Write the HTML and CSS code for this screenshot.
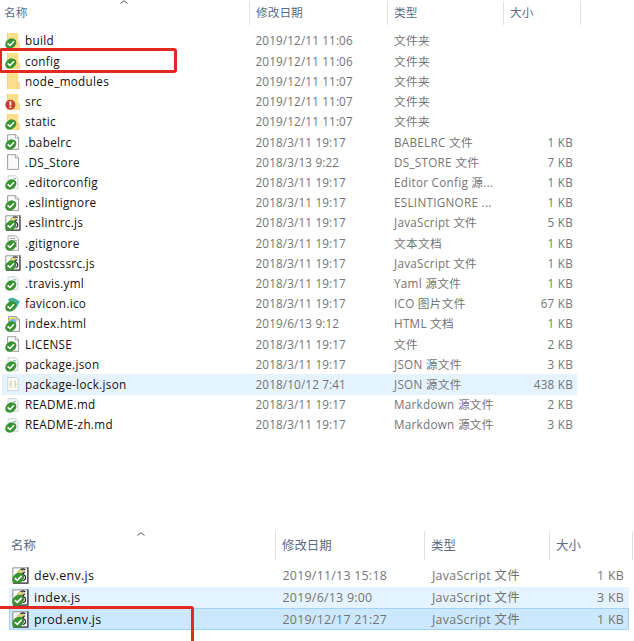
FILE: index.html
```
<!DOCTYPE html>
<html lang="zh-CN">
<head>
    <meta charset="UTF-8">
    <title>文件列表</title>
    <link rel="stylesheet" href="styles.css">
</head>
<body>
    <!-- Icon set -->
    <svg class="sprite" width="0" height="0">
        <symbol id="ok" viewBox="0 0 16 16">
            <ellipse cx="5.8" cy="10.5" rx="5.9" ry="4.7" transform="rotate(-35 5.8 10.5)" fill="#36932f"/>
            <path d="M2.6 10.4l2.4 2.1 4-4.2" fill="none" stroke="#fff" stroke-width="1.6"/>
        </symbol>
        <symbol id="folder" viewBox="0 0 16 16">
            <path d="M2.3 0h11v9.5h1.2V16H2.3z" fill="#fbdf8d"/>
            <path d="M2.5 0v16M12.3 15.5v-5.5l1-1 1 1v5.5z" fill="#ffe9a9" stroke="#ecc864" stroke-width=".7"/>
        </symbol>
        <symbol id="folder-ok" viewBox="0 0 16 16">
            <use href="#folder"/><use href="#ok"/>
        </symbol>
        <symbol id="folder-err" viewBox="0 0 16 16">
            <use href="#folder"/>
            <circle cx="5.4" cy="10.7" r="5" fill="#c8402c"/>
            <path d="M5.4 7.2v4.2M5.4 12.4v1.6" stroke="#fff" stroke-width="1.7"/>
        </symbol>
        <symbol id="page" viewBox="0 0 16 16">
            <path d="M2.6.7h8l3 3v11.7h-11z" fill="#fafafa" stroke="#939393" stroke-width=".9"/>
            <path d="M10.4.7v3.2h3.2" fill="#fff" stroke="#939393" stroke-width=".8"/>
        </symbol>
        <symbol id="page-ok" viewBox="0 0 16 16">
            <use href="#page"/><use href="#ok"/>
        </symbol>
        <symbol id="source" viewBox="0 0 16 16">
            <path d="M3 1.8h7.6l2.3 2.3v10.5H3z" fill="#f7f9fa" stroke="#c3c8cc" stroke-width=".8"/>
            <path d="M8 4.8h3" stroke="#7fa6c4"/>
            <use href="#ok"/>
        </symbol>
        <symbol id="text" viewBox="0 0 16 16">
            <path d="M3 .8h7.8l2.7 2.7v11.9H3z" fill="#f4f4f4" stroke="#999" stroke-width=".8"/>
            <path d="M5 3.5h5M5 5.5h7M8 7.5h4M10 9.5h2M10 11.5h2" stroke="#999" stroke-width=".8"/>
            <use href="#ok"/>
        </symbol>
        <symbol id="json" viewBox="0 0 16 16">
            <path d="M2.8 1.5h8.4l2 2v11.2H2.8z" fill="#fafbf8" stroke="#c5cbd0" stroke-width=".8"/>
            <path d="M6.8 5q-1.2 0-1 1.6t-1 1.6q1.2 0 1 1.5t1 1.6M9.4 5q1.2 0 1 1.6t1 1.6q-1.2 0-1 1.5t-1 1.6" fill="none" stroke="#c3bd82" stroke-width=".9"/>
        </symbol>
        <symbol id="js" viewBox="0 0 16 16">
            <path d="M.8.8h14v14H.8z" fill="#fff" stroke="#888" stroke-width=".9"/>
            <path d="M15 .3v15H1" fill="none" stroke="#333" stroke-width="1.1"/>
            <path d="M4.5 5.2L7.6 2.4l3 .6-.6 2.2-3 1.2" fill="#e6df78" stroke="#8b8950" stroke-width=".6"/>
            <path d="M8 2.3l3-.5 1.6 1M12.2 4.3l-2.2 2 2.4 2.2.4 2.6-2.2 2" fill="none" stroke="#222" stroke-width="1.1"/>
            <use href="#ok"/>
        </symbol>
        <symbol id="ico" viewBox="0 0 16 16">
            <path d="M3 3.5q4-3 7-1l5 3-3.5 6-4 2z" fill="#43ae9a"/>
            <use href="#ok"/>
        </symbol>
        <symbol id="html" viewBox="0 0 16 16">
            <path d="M3.5.7h8l3 3v11.7h-11z" fill="#fff" stroke="#888" stroke-width=".9"/>
            <path d="M11.3.7v3.2h3.2" fill="none" stroke="#888" stroke-width=".8"/>
            <circle cx="7.5" cy="6" r="3.8" fill="#76bbe4"/>
            <path d="M3.5 5q1-3.3 5-3 2.6.5 3 2.6" fill="none" stroke="#efcf58" stroke-width="1.3"/>
            <use href="#ok"/>
        </symbol>
    </svg>

    <div class="list project">
        <div class="head">
            <div>名称<svg class="sort" viewBox="0 0 8 4"><path d="M.5 3.5L4 .7l3.5 2.8"/></svg></div>
            <div>修改日期</div>
            <div>类型</div>
            <div>大小</div>
        </div>
        <div class="row"><svg class="icon"><use href="#folder-ok"/></svg><span class="name">build</span><span>2019/12/11 11:06</span><span class="type">文件夹</span><span class="size"></span></div>
        <div class="row marked"><svg class="icon"><use href="#folder-ok"/></svg><span class="name">config</span><span>2019/12/11 11:06</span><span class="type">文件夹</span><span class="size"></span></div>
        <div class="row"><svg class="icon"><use href="#folder"/></svg><span class="name">node_modules</span><span>2019/12/11 11:07</span><span class="type">文件夹</span><span class="size"></span></div>
        <div class="row"><svg class="icon"><use href="#folder-err"/></svg><span class="name">src</span><span>2019/12/11 11:07</span><span class="type">文件夹</span><span class="size"></span></div>
        <div class="row"><svg class="icon"><use href="#folder-ok"/></svg><span class="name">static</span><span>2019/12/11 11:07</span><span class="type">文件夹</span><span class="size"></span></div>
        <div class="row"><svg class="icon"><use href="#page-ok"/></svg><span class="name">.babelrc</span><span>2018/3/11 19:17</span><span class="type">BABELRC 文件</span><span class="size">1 KB</span></div>
        <div class="row"><svg class="icon"><use href="#page"/></svg><span class="name">.DS_Store</span><span>2018/3/13 9:22</span><span class="type">DS_STORE 文件</span><span class="size">7 KB</span></div>
        <div class="row"><svg class="icon"><use href="#source"/></svg><span class="name">.editorconfig</span><span>2018/3/11 19:17</span><span class="type">Editor Config 源...</span><span class="size">1 KB</span></div>
        <div class="row"><svg class="icon"><use href="#page-ok"/></svg><span class="name">.eslintignore</span><span>2018/3/11 19:17</span><span class="type">ESLINTIGNORE ...</span><span class="size">1 KB</span></div>
        <div class="row"><svg class="icon"><use href="#js"/></svg><span class="name">.eslintrc.js</span><span>2018/3/11 19:17</span><span class="type">JavaScript 文件</span><span class="size">5 KB</span></div>
        <div class="row"><svg class="icon"><use href="#text"/></svg><span class="name">.gitignore</span><span>2018/3/11 19:17</span><span class="type">文本文档</span><span class="size">1 KB</span></div>
        <div class="row"><svg class="icon"><use href="#js"/></svg><span class="name">.postcssrc.js</span><span>2018/3/11 19:17</span><span class="type">JavaScript 文件</span><span class="size">1 KB</span></div>
        <div class="row"><svg class="icon"><use href="#source"/></svg><span class="name">.travis.yml</span><span>2018/3/11 19:17</span><span class="type">Yaml 源文件</span><span class="size">1 KB</span></div>
        <div class="row"><svg class="icon"><use href="#ico"/></svg><span class="name">favicon.ico</span><span>2018/3/11 19:17</span><span class="type">ICO 图片文件</span><span class="size">67 KB</span></div>
        <div class="row"><svg class="icon"><use href="#html"/></svg><span class="name">index.html</span><span>2019/6/13 9:12</span><span class="type">HTML 文档</span><span class="size">1 KB</span></div>
        <div class="row"><svg class="icon"><use href="#page-ok"/></svg><span class="name">LICENSE</span><span>2018/3/11 19:17</span><span class="type">文件</span><span class="size">2 KB</span></div>
        <div class="row"><svg class="icon"><use href="#source"/></svg><span class="name">package.json</span><span>2018/3/11 19:17</span><span class="type">JSON 源文件</span><span class="size">3 KB</span></div>
        <div class="row hover"><svg class="icon"><use href="#json"/></svg><span class="name">package-lock.json</span><span>2018/10/12 7:41</span><span class="type">JSON 源文件</span><span class="size">438 KB</span></div>
        <div class="row"><svg class="icon"><use href="#source"/></svg><span class="name">README.md</span><span>2018/3/11 19:17</span><span class="type">Markdown 源文件</span><span class="size">2 KB</span></div>
        <div class="row"><svg class="icon"><use href="#source"/></svg><span class="name">README-zh.md</span><span>2018/3/11 19:17</span><span class="type">Markdown 源文件</span><span class="size">3 KB</span></div>
    </div>

    <div class="list config">
        <div class="head">
            <div>名称<svg class="sort" viewBox="0 0 8 4"><path d="M.5 3.5L4 .7l3.5 2.8"/></svg></div>
            <div>修改日期</div>
            <div>类型</div>
            <div>大小</div>
        </div>
        <div class="row"><svg class="icon"><use href="#js"/></svg><span class="name">dev.env.js</span><span>2019/11/13 15:18</span><span class="type">JavaScript 文件</span><span class="size">1 KB</span></div>
        <div class="row hover"><svg class="icon"><use href="#js"/></svg><span class="name">index.js</span><span>2019/6/13 9:00</span><span class="type">JavaScript 文件</span><span class="size">3 KB</span></div>
        <div class="row selected marked"><svg class="icon"><use href="#js"/></svg><span class="name">prod.env.js</span><span>2019/12/17 21:27</span><span class="type">JavaScript 文件</span><span class="size">1 KB</span></div>
    </div>
</body>
</html>
```
FILE: styles.css
```
* {
    box-sizing: border-box;
}

body {
    margin: 0;
    width: 634px;
    height: 641px;
    overflow: hidden;
    background: #fff;
    color: #747474;
    font-family: "Open Sans", "Noto Sans CJK SC", sans-serif;
    font-size: 11.7px;
}

.sprite {
    position: absolute;
}

.list {
    white-space: nowrap;
}

/* Column headers */
.head {
    display: grid;
    color: #5b6b82;
}

.head div {
    position: relative;
    padding-left: 6px;
    border-right: 1px solid #e2e2e2;
}

.sort {
    position: absolute;
    width: 8px;
    height: 4px;
    fill: none;
    stroke: #555;
}

/* File rows */
.row {
    position: relative;
    display: grid;
    align-items: center;
    line-height: 16px;
    letter-spacing: 0.15px;
}

.row span {
    height: 17px;
}

.icon {
    display: block;
}

.row .name {
    color: #111;
    letter-spacing: 0.32px;
}

.row .type {
    letter-spacing: 0.28px;
}

.row .size {
    text-align: right;
    letter-spacing: 0.25px;
}

.hover {
    background: #e5f3ff;
}

.selected {
    background: #cce8ff;
    box-shadow: inset 0 0 0 1px #a4d3f7;
}

/* Red frame round the important entry */
.marked::after {
    content: "";
    position: absolute;
    z-index: 1;
    box-sizing: border-box;
    border: 3px solid #e3291f;
    border-radius: 3px;
}

/* Project folder */
.project {
    height: 531px;
    padding: 1px 0 0 2px;
}

.project .head {
    grid-template-columns: 248px 138px 116px 77px;
    height: 24px;
    margin-bottom: 5.9px;
    line-height: 22px;
}

.project .head div:first-child {
    padding-left: 2px;
}

.project .sort {
    left: 118px;
    top: -1px;
}

.project .row {
    grid-template-columns: 23px 230.5px 138.5px 115px 64px;
    width: 575px;
    height: 20.21px;
}

.project .icon {
    width: 16px;
    height: 16px;
    margin-left: 3px;
}

.project .marked::after {
    left: -3px;
    top: -3px;
    width: 178px;
    height: 25px;
}

/* Config folder */
.config {
    padding-left: 9px;
    font-size: 12.4px;
}

.config .head {
    grid-template-columns: 267px 149px 125px 83px;
    height: 27px;
    margin-bottom: 7px;
    line-height: 29px;
}

.config .head div:first-child {
    padding-left: 2px;
}

.config .sort {
    left: 128px;
    top: 1px;
}

.config .row {
    grid-template-columns: 25px 248.5px 149.5px 124px 68px;
    width: 619.5px;
    height: 21.7px;
    line-height: 18px;
    letter-spacing: 0.25px;
}

.config .icon {
    width: 17px;
    height: 17px;
    margin-left: 3px;
}

.config .marked::after {
    left: -12px;
    top: -2px;
    width: 197px;
    height: 40px;
}
```
